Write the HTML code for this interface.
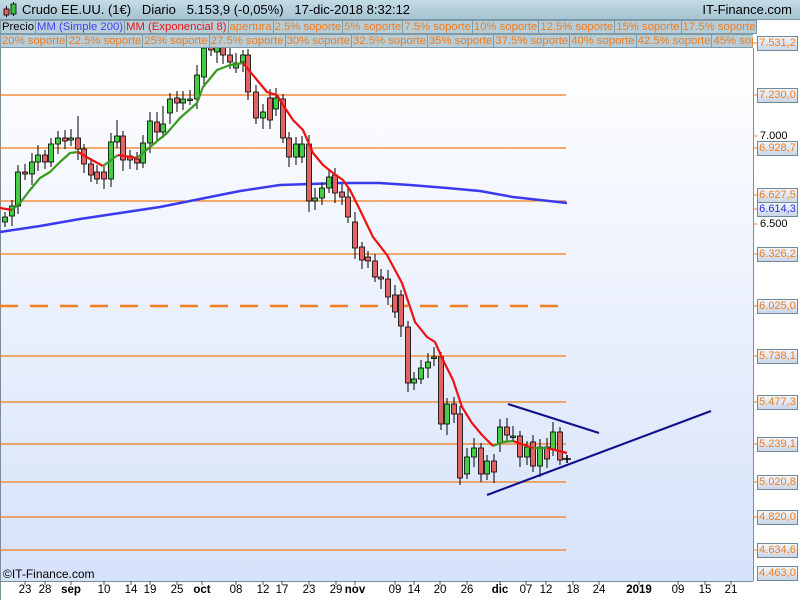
<!DOCTYPE html>
<html><head><meta charset="utf-8"><style>
body{margin:0;width:800px;height:600px;overflow:hidden;font-family:"Liberation Sans",sans-serif;background:#fff;position:relative}
#hdr{position:absolute;left:0;top:0;width:800px;height:20px;background:linear-gradient(#c4dce6,#a6c4d2);border-bottom:1px solid #7a98a6;box-sizing:border-box}
#hdr span{position:absolute;top:2px;font-size:13px;color:#000}
.row{position:absolute;left:0;height:14px;display:flex;font-size:11.3px;line-height:13px;white-space:nowrap}
.row div{background:#b7ced9;border:1px solid #7f9aa8;margin-right:-1px;padding:0 1px;color:#f07b1c}
.lbl{position:absolute;left:757px;width:39px;height:13px;border:1px solid #708898;background:linear-gradient(#f2f6fc,#cad6e6);font-size:11px;line-height:13px;color:#f07b1c;text-align:center;overflow:hidden;white-space:nowrap}
.ax{position:absolute;font-size:11px;color:#000}
.xl{position:absolute;top:584px;font-size:11.5px;transform:translateX(-50%)}
</style></head><body>
<svg width="800" height="600" style="position:absolute;left:0;top:0">
<defs><linearGradient id="bg" x1="0" y1="0" x2="0" y2="1"><stop offset="0" stop-color="#ffffff"/><stop offset="1" stop-color="#d6e2fa"/></linearGradient></defs>
<rect x="0" y="48" width="753" height="533" fill="url(#bg)"/>
<line x1="753.5" y1="48" x2="753.5" y2="581" stroke="#7a8e9a"/>
<line x1="0" y1="581.5" x2="753" y2="581.5" stroke="#7a8e9a"/>
<line x1="0.5" y1="20" x2="0.5" y2="600" stroke="#7a8e9a"/>
<g id="hl" stroke="#f07b1c" stroke-width="1.2"></g>
<line x1="0" y1="306" x2="566" y2="306" stroke="#f08020" stroke-width="2.5" stroke-dasharray="18,12"/>
<g id="ticks" stroke="#555"></g>
<polyline fill="none" stroke="#3a3af0" stroke-width="2.5" points="0,232 40,226 80,219 120,213 160,207 200,199 240,191 280,185 310,184 340,183 380,183 410,185 447,188 480,191 513,197 540,200 567,203"/>
<g id="c"></g>
<g fill="none" stroke-width="2.2" stroke-linejoin="round">
<polyline stroke="#ee1111" points="0,208 12,210"/>
<polyline stroke="#3a9a20" points="12,210 20,203 30,190 40,178 50,172 60,162 70,153 78,152"/>
<polyline stroke="#ee1111" points="78,152 90,159 103,166"/>
<polyline stroke="#3a9a20" points="103,166 118,155"/>
<polyline stroke="#ee1111" points="118,155 137,158"/>
<polyline stroke="#3a9a20" points="137,158 150,147 167,133 180,118 197,103 203,87 217,70 230,65 243,63"/>
<polyline stroke="#ee1111" points="243,63 257,80 267,92 277,95 283,105 293,120 303,130 313,153 323,165 333,173 343,180 350,190 360,210 373,237 387,255 402,283 415,322 427,337 435,342 443,360 453,380 462,407 472,423 482,435 493,446"/>
<polyline stroke="#3a9a20" points="493,446 503,442 513,441"/>
<polyline stroke="#ee1111" points="513,441 533,448"/>
<polyline stroke="#3a9a20" points="533,448 547,448"/>
<polyline stroke="#ee1111" points="547,448 567,453"/>
</g>
<g stroke="#10108a" stroke-width="2.2"><line x1="508" y1="404" x2="599" y2="433"/><line x1="487" y1="495" x2="711" y2="411"/></g>
<path d="M563 459h8M567 455v8" stroke="#000" stroke-width="1.5"/>
<g><rect x="4" y="8" width="5" height="7" fill="#e06060" stroke="#000" stroke-width=".8"/><rect x="11" y="3" width="5" height="12" fill="#40c040" stroke="#000" stroke-width=".8"/></g>
</svg>
<div id="hdr"><span style="left:22px">Crudo EE.UU. (1€)&nbsp;&nbsp;&nbsp;Diario&nbsp;&nbsp;&nbsp;5.153,9 (-0,05%)&nbsp;&nbsp;&nbsp;17-dic-2018 8:32:12</span><span style="right:8px">IT-Finance.com</span></div>
<svg width="20" height="20" style="position:absolute;left:0;top:0"><line x1="6.5" y1="6" x2="6.5" y2="17" stroke="#000"/><rect x="4" y="9" width="5" height="6" fill="#e06060" stroke="#000" stroke-width=".8"/><line x1="13.5" y1="2" x2="13.5" y2="16" stroke="#000"/><rect x="11" y="4" width="5" height="10" fill="#40c040" stroke="#000" stroke-width=".8"/></svg>
<div class="row" style="top:20px"><div style="color:#000">Precio</div><div style="color:#4040ff">MM (Simple 200)</div><div style="color:#ee1111">MM (Exponencial 8)</div><div>apertura</div><div>2.5% soporte</div><div>5% soporte</div><div>7.5% soporte</div><div>10% soporte</div><div>12.5% soporte</div><div>15% soporte</div><div>17.5% soporte</div></div>
<div class="row" style="top:34px;width:753px;overflow:hidden"><div>20% soporte</div><div>22.5% soporte</div><div>25% soporte</div><div>27.5% soporte</div><div>30% soporte</div><div>32.5% soporte</div><div>35% soporte</div><div>37.5% soporte</div><div>40% soporte</div><div>42.5% soporte</div><div>45% soporte</div></div>
<div class="ax" style="left:760px;top:130px">7.000</div>
<div class="ax" style="left:760px;top:218px">6.500</div>
<div class="lbl" style="top:36px">7.531,2</div>
<div class="lbl" style="top:88px">7.230,0</div>
<div class="lbl" style="top:141px">6.928,7</div>
<div class="lbl" style="top:188px">6.627,5</div>
<div class="lbl" style="top:202px;color:#3030e0">6.614,3</div>
<div class="lbl" style="top:247px">6.326,2</div>
<div class="lbl" style="top:299px">6.025,0</div>
<div class="lbl" style="top:349px">5.738,1</div>
<div class="lbl" style="top:395px">5.477,3</div>
<div class="lbl" style="top:437px">5.239,1</div>
<div class="lbl" style="top:475px">5.020,8</div>
<div class="lbl" style="top:510px">4.820,0</div>
<div class="lbl" style="top:543px">4.634,6</div>
<div class="lbl" style="top:566px">4.463,0</div>
<div class="ax" style="left:3px;top:567px;font-size:12px">©IT-Finance.com</div>
<div id="xl"></div>
<script>
var ns="http://www.w3.org/2000/svg";
function el(p,t,a){var e=document.createElementNS(ns,t);for(var k in a)e.setAttribute(k,a[k]);p.appendChild(e);return e;}
var hl=document.getElementById('hl');
[95,148,201,254,356,402,444,482,517,550].forEach(function(y){el(hl,'line',{x1:0,y1:y,x2:566,y2:y});});
var tk=document.getElementById('ticks');
[43,95,136,148,195,209,224,254,306,356,402,444,482,517,550].forEach(function(y){el(tk,'line',{x1:753,y1:y,x2:757,y2:y,stroke:'#f07b1c'});});
var d=[[5,217,222,1],[12,206,216,1],[18,172,206,1],[25,172,174,0],[32,162,174,1],[38,155,162,1],[45,155,162,0],[51,144,162,1],[58,138,144,1],[65,138,141,0],[71,138,140,1],[78,138,149,0,116],[84,149,164,0],[91,164,175,0],[97,172,179,0],[104,172,179,0],[111,142,179,1],[117,136,142,1,120],[123,136,160,0],[130,156,160,0],[137,159,163,0],[143,143,163,1],[150,121,143,1],[157,122,132,0],[163,124,132,1,106],[170,99,113,1],[177,98,103,0],[183,99,103,1],[190,99,100,1],[197,75,99,1],[204,48,77,1],[211,40,50,0],[217,44,52,1],[223,47,55,0],[230,55,62,0],[236,63,68,1],[243,55,62,1],[248,55,92,0],[256,92,118,0],[263,112,118,1],[270,98,120,0],[276,98,109,1],[283,99,138,0],[289,138,157,0],[296,144,157,1],[302,144,157,1],[309,144,201,0],[315,198,201,1],[322,188,198,1],[329,177,188,1],[335,175,193,0],[342,192,197,0],[348,197,217,0],[355,222,248,0],[362,247,260,0],[368,257,261,0],[375,261,277,0],[381,277,279,0],[388,279,297,0],[395,295,312,0],[401,295,326,0],[408,327,383,0],[414,379,383,1],[421,368,379,1],[428,362,368,1],[434,357,358,1],[441,357,424,0],[447,404,424,1],[454,404,414,0],[460,414,478,0],[467,457,474,1],[474,448,457,1],[481,448,474,0],[487,461,474,1],[494,461,472,0],[500,427,443,1],[507,427,435,0],[513,436,437,1],[520,436,457,0],[527,447,457,1],[533,442,466,0],[540,447,466,1],[547,447,459,0],[553,432,449,1],[560,432,460,0]];
var g=document.getElementById('c');
d.forEach(function(c,i){var hi=c[4]||c[1]-5-(i*7%6),lo=c[2]+5+(i*5%7);
el(g,'line',{x1:c[0],y1:hi,x2:c[0],y2:lo,stroke:'#000','stroke-width':1});
var h=Math.max(c[2]-c[1],1.5);
el(g,'rect',{x:c[0]-2.5,y:c[1],width:5,height:h,fill:c[3]?'#44cc44':'#e06464',stroke:'#000','stroke-width':0.8});});
var xs=[[25,'23'],[45,'28'],[71,'sep',1],[104,'10'],[131,'14'],[150,'19'],[177,'25'],[202,'oct',1],[236,'08'],[263,'12'],[282,'17'],[309,'23'],[336,'29'],[355,'nov',1],[395,'09'],[414,'14'],[440,'20'],[467,'26'],[500,'dic',1],[526,'07'],[546,'12'],[573,'18'],[599,'24'],[639,'2019',1],[678,'09'],[705,'15'],[731,'21']];
var xl=document.getElementById('xl');
xs.forEach(function(a){var s=document.createElement('div');s.className='xl';s.style.left=a[0]+'px';s.textContent=a[1];if(a[2])s.style.fontWeight='bold';xl.appendChild(s);el(tk,'line',{x1:a[0],y1:581,x2:a[0],y2:585,stroke:'#555'});});
</script>
</body></html>
